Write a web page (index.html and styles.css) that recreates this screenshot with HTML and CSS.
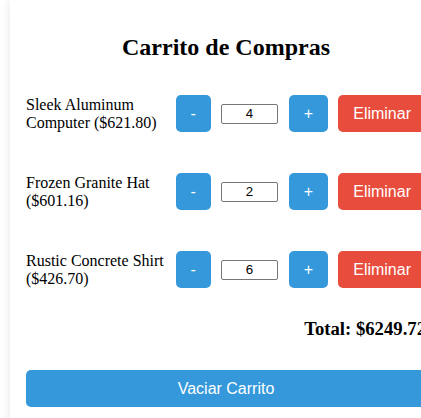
FILE: index.html
```html
<!DOCTYPE html>
<html lang="es">
<head>
<meta charset="utf-8">
<title>Carrito de Compras</title>
<link rel="stylesheet" href="styles.css">
</head>
<body>
<div class="container">
  <h2 class="title">Carrito de Compras</h2>
  <div class="cart-list">
    <div class="cart-item">
      <div class="item-info">Sleek Aluminum Computer ($621.80)</div>
      <button class="btn btn-qty btn-minus">-</button>
      <input class="qty" type="text" value="4">
      <button class="btn btn-qty btn-plus">+</button>
      <button class="btn btn-remove">Eliminar</button>
    </div>
    <div class="cart-item">
      <div class="item-info">Frozen Granite Hat ($601.16)</div>
      <button class="btn btn-qty btn-minus">-</button>
      <input class="qty" type="text" value="2">
      <button class="btn btn-qty btn-plus">+</button>
      <button class="btn btn-remove">Eliminar</button>
    </div>
    <div class="cart-item">
      <div class="item-info">Rustic Concrete Shirt ($426.70)</div>
      <button class="btn btn-qty btn-minus">-</button>
      <input class="qty" type="text" value="6">
      <button class="btn btn-qty btn-plus">+</button>
      <button class="btn btn-remove">Eliminar</button>
    </div>
  </div>
  <div class="total">Total: $6249.72</div>
  <button class="btn btn-clear">Vaciar Carrito</button>
</div>
</body>
</html>
```

FILE: styles.css
```css
html, body {
  margin: 0;
  padding: 0;
  overflow: hidden;
  background: #ffffff;
}

body {
  font-family: "Liberation Serif", "Times New Roman", serif;
  font-size: 16px;
  color: #000;
}

.container {
  margin-left: 10px;
  width: 400px;
  padding: 0 16px 20px;
  background: #fff;
  box-shadow: 0 0 10px rgba(0, 0, 0, 0.1);
}

.title {
  margin: 0;
  padding: 33px 0 34px;
  font-size: 24px;
  line-height: 28px;
  font-weight: bold;
  text-align: center;
}

.cart-list {
  display: flex;
  flex-direction: column;
  gap: 41px;
}

.cart-item {
  display: flex;
  align-items: center;
  height: 37px;
}

.item-info {
  flex: 1;
  line-height: 18px;
  padding-right: 8px;
}

.btn {
  font-family: "Liberation Sans", Arial, sans-serif;
  font-size: 16px;
  line-height: 17px;
  padding: 10px 15px;
  border: none;
  border-radius: 5px;
  color: #fff;
  background: #3498db;
  cursor: pointer;
}

.btn-qty {
  flex: none;
}

.btn-remove {
  flex: none;
  margin-left: 10px;
  background: #e74c3c;
}

.qty {
  flex: none;
  box-sizing: border-box;
  width: 57px;
  height: 20px;
  margin: 0 11px 0 10px;
  padding: 0;
  border: 1px solid #767676;
  border-radius: 2px;
  font-family: "Liberation Sans", Arial, sans-serif;
  font-size: 13.33px;
  text-align: center;
  color: #000;
}

.total {
  margin-top: 30px;
  text-align: right;
  font-size: 18.7px;
  line-height: 21px;
  font-weight: bold;
}

.btn-clear {
  display: block;
  width: 400px;
  margin-top: 31px;
}
```
